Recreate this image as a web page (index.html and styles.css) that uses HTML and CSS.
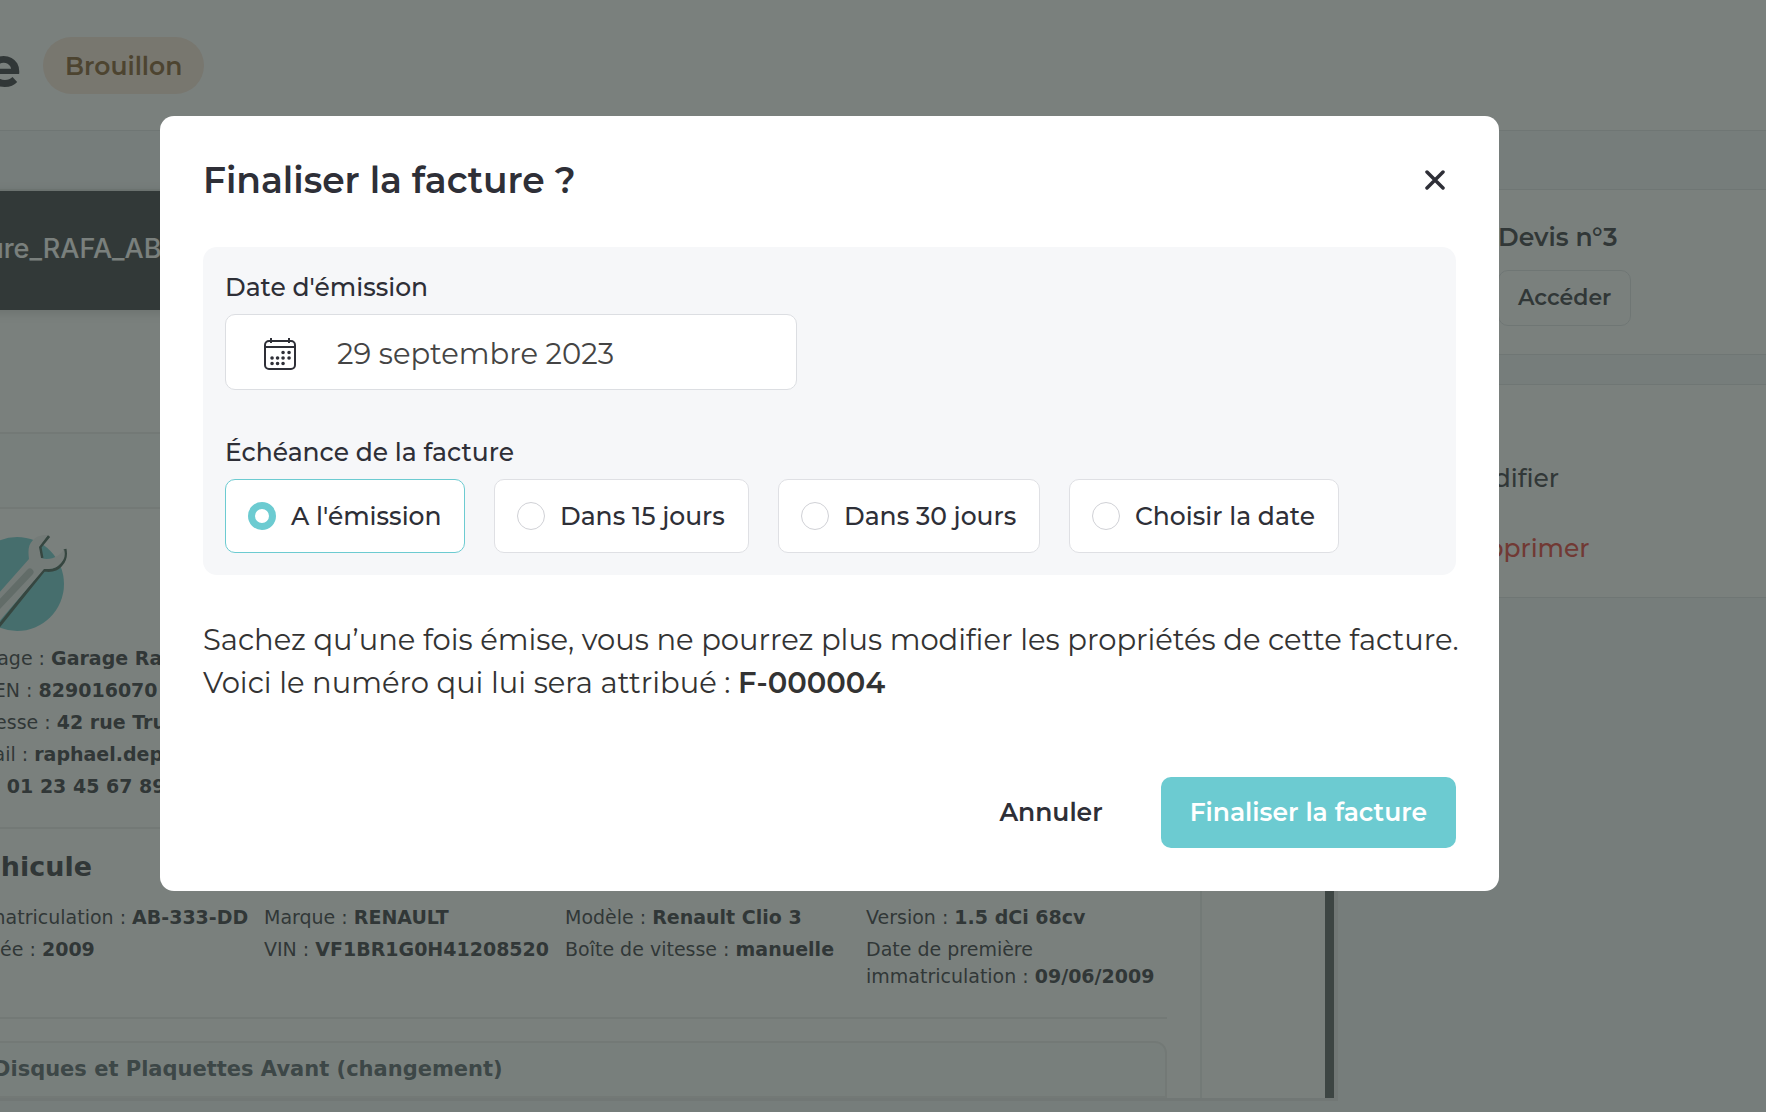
FILE: index.html
```html
<!DOCTYPE html>
<html lang="fr">
<head>
<meta charset="utf-8">
<title>Finaliser la facture</title>
<link rel="stylesheet" href="styles.css">
</head>
<body>
<div class="app">
  <header class="topbar">
    <h1 class="topbar-title">Facture</h1>
    <span class="badge">Brouillon</span>
  </header>
  <div class="columns">
    <main class="viewer">
      <div class="viewer-bar">Facture_RAFA_AB</div>
      <div class="viewer-body">
        <div class="sheet">
          <div class="sheet-gap"></div>
          <div class="sheet-band"></div>
          <div class="sheet-content">
            <svg class="logo" viewBox="0 0 112 96" aria-hidden="true">
              <circle cx="54" cy="50" r="47" fill="#6ccbd1"/>
              <path d="M36 92 81 36Q92 38 98 31Q104 25 102 15" fill="none" stroke="#3c5a52" stroke-width="3"/>
              <path d="M86 2 77 13 79 24" fill="none" stroke="#3c5a52" stroke-width="3"/>
              <path d="M10 88 66 25C65 17 65 11 70 6C75 1 80 1 85 1L76 13 78 24C88 27 97 22 101 15C103 22 101 26 97 30C92 35 88 35 81 35L34 90Z" fill="#eef0f0"/>
              <path d="M34 73 67 38" stroke="#b9c6c4" stroke-width="7" stroke-linecap="round"/>
            </svg>
            <ul class="facts">
              <li>Garage : <b>Garage Raphaël</b></li>
              <li>SIREN : <b>829016070</b></li>
              <li>Adresse : <b>42 rue Truffaut</b></li>
              <li>Email : <b>raphael.depuydt</b></li>
              <li>Tél : <b>01 23 45 67 89</b></li>
            </ul>
            <h2 class="sheet-heading">Véhicule</h2>
            <div class="vehicle">
              <ul class="facts"><li>Immatriculation : <b>AB-333-DD</b></li><li>Année : <b>2009</b></li></ul>
              <ul class="facts"><li>Marque : <b>RENAULT</b></li><li>VIN : <b>VF1BR1G0H41208520</b></li></ul>
              <ul class="facts"><li>Modèle : <b>Renault Clio 3</b></li><li>Boîte de vitesse : <b>manuelle</b></li></ul>
              <ul class="facts"><li>Version : <b>1.5 dCi 68cv</b></li><li>Date de première immatriculation : <b>09/06/2009</b></li></ul>
            </div>
            <h3 class="work">Disques et Plaquettes Avant (changement)</h3>
          </div>
        </div>
      </div>
    </main>
    <aside class="side">
      <section class="card card-quote">
        <h2 class="card-title">Devis n°3</h2>
        <button class="btn-small" type="button">Accéder</button>
      </section>
      <section class="card card-menu">
        <a class="menu-link" href="#">Modifier</a>
        <a class="menu-link danger" href="#">Supprimer</a>
      </section>
    </aside>
  </div>
</div>

<div class="overlay">
  <form class="modal" role="dialog" aria-modal="true" aria-labelledby="modal-title">
    <div class="modal-head">
      <h2 class="modal-title" id="modal-title">Finaliser la facture ?</h2>
      <button class="close" type="button" aria-label="Fermer">
        <svg width="20" height="20" viewBox="0 0 20 20"><path d="M2 2 18 18M18 2 2 18" stroke="currentColor" stroke-width="3.500" stroke-linecap="round"/></svg>
      </button>
    </div>
    <div class="settings">
      <label class="label" for="issue-date">Date d'émission</label>
      <div class="date-field">
        <svg class="calendar" width="32" height="32" viewBox="0 0 32 32" fill="none" stroke="currentColor" stroke-width="2" aria-hidden="true">
          <rect x="1" y="3" width="30" height="28" rx="4"/><path d="M1 9H31M7 0V5M25 0V5"/>
          <path d="M19 14.500h.1M25 14.500h.1M8 20h.1M13.500 20h.1M19 20h.1M25 20h.1M8 25.500h.1M13.500 25.500h.1M19 25.500h.1" stroke-width="3.500" stroke-linecap="round"/>
        </svg>
        <input class="date-input" id="issue-date" type="text" value="29 septembre 2023">
      </div>
      <fieldset class="terms">
        <legend class="label">Échéance de la facture</legend>
        <div class="term-list">
          <label class="term"><input type="radio" name="term" checked>A l'émission</label>
          <label class="term"><input type="radio" name="term">Dans 15 jours</label>
          <label class="term"><input type="radio" name="term">Dans 30 jours</label>
          <label class="term"><input type="radio" name="term">Choisir la date</label>
        </div>
      </fieldset>
    </div>
    <p class="notice">Sachez qu’une fois émise, vous ne pourrez plus modifier les propriétés de cette facture.<br>Voici le numéro qui lui sera attribué : <b>F-000004</b></p>
    <div class="actions">
      <button class="btn-text" type="button">Annuler</button>
      <button class="btn-primary" type="submit">Finaliser la facture</button>
    </div>
  </form>
</div>
</body>
</html>
```
FILE: styles.css
```css
* { box-sizing: border-box; }
body {
  margin: 0;
  height: 100vh;
  overflow: hidden;
  background: #f4f6f9;
  color: #2e2f37;
  font: 500 25px/32px Montserrat, Inter, sans-serif;
}
h1, h2, h3, p, ul { margin: 0; padding: 0; }
ul { list-style: none; }
button, input { font: inherit; color: inherit; }
button { cursor: pointer; }

/* Invoice page behind the dialog */
.app { margin-left: -37px; }
.topbar {
  display: flex;
  align-items: center;
  gap: 22px;
  height: 131px;
  background: #fff;
  border-bottom: 1px solid #dfe2e6;
}
.topbar-title { display: flex; justify-content: flex-end; width: 58px; padding-top: 4px; font-size: 56px; font-weight: 700; line-height: 64px; }
.badge {
  padding: 13px 22px 12px;
  border-radius: 29px;
  background: #f9e4d8;
  color: #7f5424;
  font-weight: 600;
}
.columns { display: flex; gap: 29px; padding-top: 58px; }
.viewer { width: 1375px; border: 2px solid #e4e6e8; border-width: 2px 4px 3px 0; background: #fff; }
.viewer-bar {
  height: 119px;
  padding: 40px 0 0;
  background: #323639;
  color: #fff;
  font: 500 27px/36px Inter, Roboto, sans-serif;
  text-indent: -31px;
  box-shadow: 0 2px 12px rgba(0, 0, 0, .2);
}
.viewer-body { border-right: 9px solid #505659; padding-right: 123px; }
.sheet { border-right: 2px solid #eceeee; }
.sheet-gap { height: 122px; }
.sheet-band { height: 77px; border: solid #eaecec; border-width: 2px 0; background: #fafbfb; margin-right: -2px; }
.sheet-content { padding-right: 33px; font: 400 19px/27px "DejaVu Sans", sans-serif; }
.logo { display: block; width: 112px; height: 96px; margin: 25px 0 15px; overflow: visible; }
.facts li { margin-bottom: 5px; }
.sheet-heading { margin-top: 27px; padding: 22px 0 21px; border-top: 2px solid #eaecec; font-size: 27px; line-height: 32px; }
.vehicle { display: grid; grid-template-columns: repeat(4, 1fr); padding-bottom: 22px; border-bottom: 2px solid #eaecec; }
.work {
  height: 57px;
  margin-top: 22px;
  padding: 13px 28px;
  border: 2px solid #eaecec;
  border-radius: 0 12px 0 0;
  background: #fafbfb;
  color: #505c66;
  font-size: 21px;
}
.side { flex: 1; }
.card { border: solid #dfe2e6; border-width: 1px 0; background: #fff; margin-bottom: 29px; }
.card-quote { height: 166px; padding: 31px 0 0 131px; }
.card-title { margin-bottom: 17px; font-size: 25px; font-weight: 600; }
.btn-small {
  height: 56px;
  padding: 0 19px;
  border: 1px solid #dfe2e6;
  border-radius: 10px;
  background: none;
  font-size: 22px;
  font-weight: 600;
}
.card-menu { display: flex; flex-direction: column; gap: 38px; height: 214px; padding: 77px 0 0 87px; }
.menu-link { color: inherit; text-decoration: none; }
.danger { color: #e5362e; }

/* Dialog */
.overlay {
  position: fixed;
  inset: 0;
  display: flex;
  align-items: flex-start;
  padding: 116px 267px 0 160px;
  background: rgba(50, 60, 55, .65);
}
.modal { flex: 1; min-width: 0; padding: 40px 43px 43px; border-radius: 14px; background: #fff; }
.modal-head { display: flex; align-items: center; justify-content: space-between; margin-bottom: 43px; }
.modal-title { font-size: 36px; font-weight: 600; line-height: 48px; }
.close { display: flex; padding: 11px; border: 0; background: none; }
.settings { padding: 24px 22px 22px; border-radius: 14px; background: #f6f7f9; }
.label { display: block; margin-bottom: 11px; padding: 0; }
.date-field {
  display: flex;
  align-items: center;
  gap: 41px;
  width: 572px;
  height: 76px;
  padding: 4px 38px 0;
  border: 1px solid #dcdee2;
  border-radius: 10px;
  background: #fff;
}
.date-input { flex: 1; min-width: 0; padding: 0; border: 0; outline: 0; background: none; color: #444; font-size: 29px; font-weight: 400; }
.terms { margin: 46px 0 0; padding: 0; border: 0; min-width: 0; }
.term-list { display: grid; grid-template-columns: 240px 255px 262px 270px; gap: 29px; }
.term {
  display: flex;
  align-items: center;
  gap: 15px;
  height: 74px;
  padding-left: 22px;
  border: 1px solid #dfe0e4;
  border-radius: 10px;
  background: #fff;
  white-space: nowrap;
}
.term:has(:checked) { border-color: #6ccbd1; }
.term input { appearance: none; width: 28px; height: 28px; margin: 0; border: 1px solid #d0d1d6; border-radius: 50%; background: #fff; }
.term input:checked { border: 7px solid #6ccbd1; }
.notice { margin: 43px 0 73px; color: #333; font-size: 29px; font-weight: 400; line-height: 43px; white-space: nowrap; }
.notice b { font-weight: 600; }
.actions { display: flex; justify-content: flex-end; gap: 29px; }
.btn-text, .btn-primary { height: 71px; padding: 0 29px 2px; border: 0; border-radius: 10px; background: none; font-weight: 600; }
.btn-primary { background: #6ccbd1; color: #fff; }
```
